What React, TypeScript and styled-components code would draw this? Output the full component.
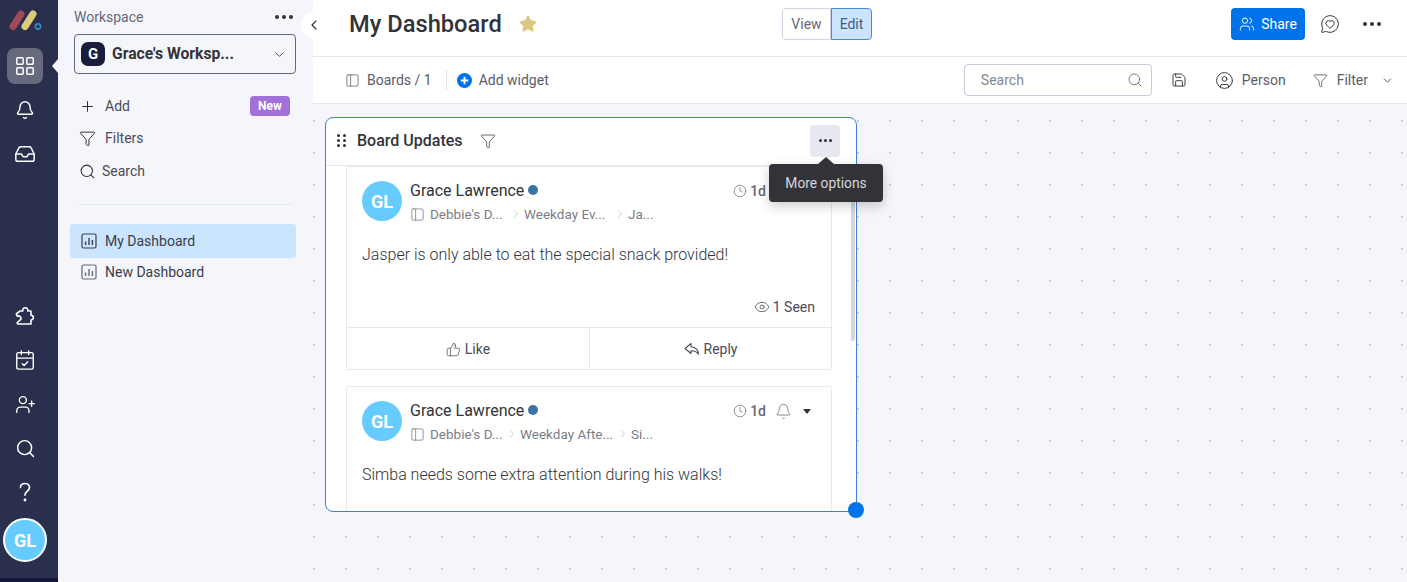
import React from 'react';
import styled, { createGlobalStyle } from 'styled-components';
import {
  Bell, Inbox, LayoutGrid, CalendarCheck, UserPlus, Search, Plus, Funnel, ChevronDown, ChevronLeft,
  Star, PanelLeft, Users, MessageCircleHeart, Save, CircleUser, Clock, Eye, ThumbsUp, ChevronRight,
} from 'lucide-react';

const Global = createGlobalStyle`
  html, body { margin: 0; padding: 0; height: 100%; overflow: hidden; }
  body { font-family: Roboto, "Liberation Sans", sans-serif; color: #323338; background: #fff; }
  #root { height: 100%; }
  * { box-sizing: border-box; }
`;

const Page = styled.div`display: flex; width: 1407px; height: 582px; overflow: hidden; position: relative;`;

const Rail = styled.nav`
  width: 58px; flex: none; background: #292f4c; display: flex; flex-direction: column; align-items: center;
  padding: 10px 8px 0 0; border-bottom: 4px solid #15173a; position: relative; color: #fff;
`;
const LogoBox = styled.div`height: 20px; margin-bottom: 18px; display: flex; margin-left: 2px;`;
const RailActive = styled.div`
  width: 36px; height: 36px; flex: none; border-radius: 8px; background: #676a7c; display: flex; align-items: center; justify-content: center; position: relative;
  &::after { content: ''; position: absolute; left: 45px; top: 11px; border: 7px solid transparent; border-left: 0; border-right: 6px solid #f5f6fb; }
`;
const RailIcon = styled.div`
  height: 44px; width: 36px; display: flex; align-items: center; justify-content: center;
`;
const RailTopGroup = styled.div`display: flex; flex-direction: column; margin-top: 4px;`;
const RailBottomGroup = styled.div`margin-top: auto; display: flex; flex-direction: column; align-items: center;`;
const RailAvatar = styled.div`
  width: 44px; height: 44px; border-radius: 50%; background: #66ccff; border: 2px solid #fff; color: #fff; font-weight: 700; font-size: 18px;
  display: flex; align-items: center; justify-content: center; margin: 4px 0 16px;
`;

const Side = styled.aside`
  width: 255px; flex: none; background: #f5f6fb; padding: 8px 17px 0 16px; display: flex; flex-direction: column; position: relative;
`;
const SideHead = styled.div`display: flex; justify-content: space-between; align-items: center; height: 18px; font-size: 14px; color: #676879; padding-right: 3px; margin-bottom: 8px;`;
const Dots = styled.div<{ $c?: string }>`
  display: flex; gap: 3px;
  i { width: 4px; height: 4px; border-radius: 50%; background: ${p => p.$c || '#323338'}; display: block; }
`;
const WsSelect = styled.div`
  height: 40px; width: 222px; border: 1px solid #676879; border-radius: 4px; display: flex; align-items: center; padding: 0 8px 0 6px; margin-bottom: 16px;
`;
const WsLogo = styled.div`width: 24px; height: 24px; border-radius: 7px; background: #1a1c3c; color: #fff; font-weight: 700; font-size: 15px; display: flex; align-items: center; justify-content: center; margin-right: 7px; flex: none;`;
const WsName = styled.div`font-weight: 700; font-size: 15.7px; flex: 1; white-space: nowrap; margin-top: -2px;`;
const SideRow = styled.div<{ $gap?: number }>`
  display: flex; align-items: center; height: 32px; padding-left: 5px; font-size: 14px; color: #4b4c57; gap: ${p => p.$gap || 9}px;
`;
const NewBadge = styled.span`
  margin-left: auto; margin-right: 6px; width: 40px; height: 20px; border-radius: 4px; background: #a36fd8; color: #fff; font-size: 12px; font-weight: 700; display: flex; align-items: center; justify-content: center;
`;
const SideDivider = styled.div`height: 1px; background: #e6e9ef; margin: 17px 3px 19px 4px;`;
const DashRow = styled.div<{ $active?: boolean }>`
  width: 226px; margin-left: -4px; height: 34px; border-radius: 3px; display: flex; align-items: center; gap: 8px; padding-left: 11px; font-size: 14px; color: #3b3d4c;
  background: ${p => (p.$active ? '#cce5ff' : 'transparent')}; margin-bottom: -3px;
`;

const Collapse = styled.button`
  position: absolute; left: 301px; top: 12px; width: 26px; height: 26px; border-radius: 50%; border: 0; background: #fff; display: flex; align-items: center; justify-content: center; padding: 0; color: #323338; z-index: 3;
`;

const Main = styled.main`flex: 1; min-width: 0; display: flex; flex-direction: column; background: #fff;`;
const Header = styled.header`height: 57px; flex: none; border-bottom: 1px solid #e6e9ef; display: flex; align-items: center; padding: 0 26px 8px 36px;`;
const Title = styled.h1`margin: 0; font-size: 23.7px; font-weight: 500; color: #323338; width: 153px; white-space: nowrap;`;
const StarWrap = styled.div`margin-left: 17px; width: 18px; height: 18px; display: flex;`;
const Toggle = styled.div`margin-left: 245px; display: flex; height: 32px;`;
const ToggleBtn = styled.div<{ $on?: boolean }>`
  display: flex; align-items: center; justify-content: center; font-size: 14px; width: ${p => (p.$on ? 41 : 49)}px;
  border: 1px solid ${p => (p.$on ? '#4a8ad4' : '#d0d4e4')}; background: ${p => (p.$on ? '#cce5ff' : '#fff')}; color: ${p => (p.$on ? '#3f5b83' : '#676879')};
  border-radius: ${p => (p.$on ? '0 4px 4px 0' : '4px 0 0 4px')};
`;
const ShareBtn = styled.div`margin-left: auto; width: 74px; height: 32px; border-radius: 4px; background: #0073ea; color: #fff; font-size: 14px; display: flex; align-items: center; justify-content: center; gap: 6px;`;
const IconSlot = styled.div<{ $ml: number }>`margin-left: ${p => p.$ml}px; display: flex; align-items: center;`;

const Toolbar = styled.div`height: 47px; flex: none; border-bottom: 1px solid #e6e9ef; display: flex; align-items: center; padding: 0 13px 0 32px; font-size: 14px; color: #5c5d6b;`;
const ToolSep = styled.div`width: 1px; height: 20px; background: #e0e2ea; margin: 0 10px 0 14px;`;
const ToolText = styled.span<{ $ml?: number }>`margin-left: ${p => p.$ml ?? 7}px; white-space: nowrap;`;
const SearchBox = styled.div`
  margin-left: auto; width: 188px; height: 32px; border: 1px solid #c9ccd8; border-radius: 4px; display: flex; align-items: center; justify-content: space-between; padding: 0 8px 0 16px; color: #858793; font-size: 14px;
`;

const Canvas = styled.div`
  flex: 1; min-height: 0; padding: 13px 0 0 12px; background-color: #f5f6fb; position: relative;
  background-image: radial-gradient(circle at 1px 1px, #c8cad4 1px, transparent 1.3px);
  background-size: 32px 32px; background-position: 0px 16px;
`;
const Widget = styled.section`
  width: 532px; height: 395px; background: #fff; border: 1px solid #3f7fd6; border-radius: 8px; position: relative; display: flex; flex-direction: column;
`;
const WidgetHead = styled.div`height: 48px; flex: none; border-bottom: 1px solid #e6e9ef; display: flex; align-items: center; padding: 0 0 2px 11px;`;
const Grip = styled.div`
  display: grid; grid-template-columns: 3px 3px; gap: 2px 3px; margin-right: 11px;
  i { width: 3px; height: 3px; border-radius: 50%; background: #323338; display: block; }
`;
const WidgetTitle = styled.div`font-size: 16px; font-weight: 500; color: #323338; margin-right: 17px; white-space: nowrap;`;
const MoreBtn = styled.div`
  position: absolute; left: 484px; top: 7px; width: 30px; height: 32px; border-radius: 4px; background: #e6e9ef; display: flex; align-items: center; justify-content: center; padding-bottom: 2px;
`;
const Tooltip = styled.div`
  position: absolute; left: 443px; top: 46px; width: 114px; height: 38px; background: #323338; color: #d5d6db; font-size: 13.8px; border-radius: 4px;
  display: flex; align-items: center; justify-content: center; z-index: 4; box-shadow: 0 4px 12px rgba(0,0,0,.2);
  &::before { content: ''; position: absolute; left: 49px; top: -7px; border: 8px solid transparent; border-top: 0; border-bottom: 7px solid #323338; }
`;
const ResizeDot = styled.div`position: absolute; right: -8px; bottom: -7px; width: 16px; height: 16px; border-radius: 50%; background: #0073ea; z-index: 2;`;
const Scrollbar = styled.div`position: absolute; left: 525px; top: 48px; width: 4px; height: 175px; background: #d6d7dc; border-radius: 2px;`;
const List = styled.div`flex: 1; min-height: 0; overflow: hidden; padding-left: 20px; display: flex; flex-direction: column; gap: 16px; border-radius: 0 0 8px 8px;`;
const Card = styled.article`width: 486px; flex: none; height: 204px; border: 1px solid #e6e9ef; border-radius: 2px; display: flex; flex-direction: column; position: relative; background: #fff;`;
const CardTop = styled.div`display: flex; padding: 14px 15px 0 15px; height: 74px;`;
const Avatar = styled.div`width: 40px; height: 40px; border-radius: 50%; background: #66ccff; color: #fff; font-weight: 700; font-size: 18px; display: flex; align-items: center; justify-content: center; flex: none;`;
const Who = styled.div`margin-left: 8px; display: flex; flex-direction: column; flex: 1;`;
const NameRow = styled.div`display: flex; align-items: center; font-size: 16px; color: #323338; height: 20px; margin-top: -1px;`;
const Online = styled.i`width: 10px; height: 10px; border-radius: 50%; background: #3a73a4; margin-left: 4px; display: block;`;
const Crumbs = styled.div`display: flex; align-items: center; font-size: 13.5px; color: #7c7d89; height: 20px; margin-top: 4px; white-space: nowrap;`;
const Crumb = styled.span<{ $w: number }>`width: ${p => p.$w}px; display: block;`;
const Meta = styled.div`display: flex; align-items: center; height: 20px; color: #676879; font-size: 14px; font-weight: 500;`;
const Caret = styled.i`width: 0; height: 0; border: 4px solid transparent; border-top: 5px solid #323338; border-bottom: 0; margin-left: 11px; margin-right: 5px; display: block;`;
const Body = styled.p`margin: 0; padding: 0 15px; font-size: 16px; font-weight: 300; color: #323338; height: 40px; white-space: nowrap; margin-top: 4px;`;
const Seen = styled.div`display: flex; align-items: center; justify-content: flex-end; gap: 3px; padding-right: 16px; font-size: 14px; color: #4b4c57; height: 18px; margin-top: 13px;`;
const Actions = styled.div`margin-top: auto; height: 42px; border-top: 1px solid #e6e9ef; display: grid; grid-template-columns: 243px 1fr;`;
const Action = styled.div<{ $split?: boolean }>`
  display: flex; align-items: center; justify-content: center; gap: 4px; font-size: 14px; color: #4b4c57; padding-top: 1px;
  border-right: ${p => (p.$split ? '1px solid #e6e9ef' : '0')};
`;

const Logo = () => (
  <svg width="34" height="22" viewBox="0 0 34 22">
    <line x1="4" y1="16.5" x2="12" y2="4" stroke="#a14b57" strokeWidth="7" strokeLinecap="round" />
    <line x1="16" y1="16.5" x2="24" y2="4" stroke="#dccb7e" strokeWidth="7" strokeLinecap="round" />
    <circle cx="29" cy="16.5" r="2.6" fill="none" stroke="#2f8fc4" strokeWidth="1.6" />
  </svg>
);
const ChartSq = ({ c }: { c: string }) => (
  <svg width="16" height="16" viewBox="0 0 16 16" fill="none" stroke={c} strokeWidth="1.2">
    <rect x="1" y="1" width="14" height="14" rx="1.5" />
    <path d="M4.6 12V8.5M8 12V5M11.4 12V7" strokeWidth="1.4" />
  </svg>
);
const Question = () => (
  <svg width="20" height="22" viewBox="0 0 20 22" fill="none" stroke="#fff" strokeWidth="1.7" strokeLinecap="round">
    <path d="M5.5 6.5C5.5 3.8 7.5 2.5 10 2.5s4.5 1.6 4.5 4c0 3.6-4.5 3.6-4.5 7.5" />
    <circle cx="10" cy="19" r=".6" fill="#fff" />
  </svg>
);
const PuzzleIcon = () => (
  <svg width="22" height="22" viewBox="0 0 22 22" fill="none" stroke="#fff" strokeWidth="1.6" strokeLinejoin="round">
    <path d="M6 6h2.8a2.6 2.6 0 1 1 5 0H17v4.2a2.4 2.4 0 1 1 0 4.8V19H4.2c-.9 0-1.3-1-.7-1.6l2.2-2a2.4 2.4 0 1 0-2.4-4.2L2.6 10c-.5-.6-.2-1.4.4-1.7z" />
  </svg>
);
const ReplyArrow = () => (
  <svg width="16" height="14" viewBox="0 0 16 14" fill="none" stroke="#4b4c57" strokeWidth="1.1" strokeLinejoin="round">
    <path d="M7 1.5 1 6.5l6 5V8.8c3 0 5.6.6 7.5 3.4-.3-4.4-3-7-7.5-7.4z" />
  </svg>
);
const AddCircle = () => (
  <svg width="15" height="15" viewBox="0 0 15 15">
    <circle cx="7.5" cy="7.5" r="7.5" fill="#0073ea" />
    <path d="M7.5 3.8v7.4M3.8 7.5h7.4" stroke="#fff" strokeWidth="1.8" />
  </svg>
);
const ThreeDots = ({ c }: { c?: string }) => <Dots $c={c}><i /><i /><i /></Dots>;

const SmallDots = styled(Dots)`
  gap: 2px; i { width: 3px; height: 3px; }
`;

type Update = { aw: number; b: string; bw: number; c: string; body: string; footer: boolean };
const UpdateCard = ({ u }: { u: Update }) => (
  <Card>
    <CardTop>
      <Avatar>GL</Avatar>
      <Who>
        <NameRow>Grace Lawrence<Online /></NameRow>
        <Crumbs>
          <PanelLeft size={15} strokeWidth={1.1} color="#676879" style={{ marginRight: 5 }} />
          <Crumb $w={u.aw}>Debbie's D...</Crumb>
          <ChevronRight size={12} strokeWidth={1} color="#9a9ba6" style={{ margin: '0 2px 0 3px' }} />
          <Crumb $w={u.bw}>{u.b}</Crumb>
          <ChevronRight size={12} strokeWidth={1} color="#9a9ba6" style={{ margin: '0 2px 0 0' }} />
          <span>{u.c}</span>
        </Crumbs>
      </Who>
      <Meta>
        <Clock size={14} strokeWidth={1.2} color="#676879" style={{ marginRight: 3 }} />
        1d
        <Bell size={17} strokeWidth={1.1} color="#676879" style={{ marginLeft: 9 }} />
        <Caret />
      </Meta>
    </CardTop>
    <Body>{u.body}</Body>
    {u.footer && (
      <>
        <Seen><Eye size={16} strokeWidth={1.2} />1 Seen</Seen>
        <Actions>
          <Action $split><ThumbsUp size={15} strokeWidth={1.2} />Like</Action>
          <Action><ReplyArrow />Reply</Action>
        </Actions>
      </>
    )}
  </Card>
);

const updates: Update[] = [
  { aw: 77, b: 'Weekday Ev...', bw: 90, c: 'Ja...', body: 'Jasper is only able to eat the special snack provided!', footer: true },
  { aw: 73, b: 'Weekday Afte...', bw: 97, c: 'Si...', body: 'Simba needs some extra attention during his walks!', footer: false },
];

export default function App() {
  return (
    <Page>
      <Global />
      <Rail>
        <LogoBox><Logo /></LogoBox>
        <RailActive><LayoutGrid size={22} strokeWidth={1.6} color="#fff" /></RailActive>
        <RailTopGroup>
          <RailIcon><Bell size={20} strokeWidth={1.7} /></RailIcon>
          <RailIcon><Inbox size={22} strokeWidth={1.6} /></RailIcon>
        </RailTopGroup>
        <RailBottomGroup>
          <RailIcon><PuzzleIcon /></RailIcon>
          <RailIcon><CalendarCheck size={22} strokeWidth={1.5} /></RailIcon>
          <RailIcon><UserPlus size={21} strokeWidth={1.6} /></RailIcon>
          <RailIcon><Search size={21} strokeWidth={1.7} /></RailIcon>
          <RailIcon><Question /></RailIcon>
          <RailAvatar>GL</RailAvatar>
        </RailBottomGroup>
      </Rail>
      <Side>
        <SideHead>Workspace<ThreeDots /></SideHead>
        <WsSelect>
          <WsLogo>G</WsLogo>
          <WsName>Grace's Worksp...</WsName>
          <ChevronDown size={15} strokeWidth={1.6} color="#4b4c57" />
        </WsSelect>
        <SideRow><Plus size={17} strokeWidth={1.4} color="#323338" />Add<NewBadge>New</NewBadge></SideRow>
        <SideRow><Funnel size={17} strokeWidth={1.4} color="#323338" />Filters</SideRow>
        <SideRow $gap={6} style={{ marginTop: 1 }}><Search size={17} strokeWidth={1.5} color="#323338" />Search</SideRow>
        <SideDivider />
        <DashRow $active><ChartSq c="#3b3d56" />My Dashboard</DashRow>
        <DashRow><ChartSq c="#676879" />New Dashboard</DashRow>
      </Side>
      <Collapse aria-label="collapse"><ChevronLeft size={16} strokeWidth={1.8} /></Collapse>
      <Main>
        <Header>
          <Title>My Dashboard</Title>
          <StarWrap><Star size={18} fill="#d9c97e" color="#d9c97e" /></StarWrap>
          <Toggle>
            <ToggleBtn>View</ToggleBtn>
            <ToggleBtn $on>Edit</ToggleBtn>
          </Toggle>
          <ShareBtn><Users size={16} strokeWidth={1.4} />Share</ShareBtn>
          <IconSlot $ml={15}><MessageCircleHeart size={20} strokeWidth={1.2} color="#323338" /></IconSlot>
          <IconSlot $ml={23}><ThreeDots /></IconSlot>
        </Header>
        <Toolbar>
          <PanelLeft size={15} strokeWidth={1.1} color="#4b4c57" />
          <ToolText>Boards / 1</ToolText>
          <ToolSep />
          <AddCircle />
          <ToolText>Add widget</ToolText>
          <SearchBox>Search<Search size={16} strokeWidth={1.3} color="#676879" /></SearchBox>
          <IconSlot $ml={19}><Save size={16} strokeWidth={1.4} color="#323338" /></IconSlot>
          <IconSlot $ml={28}><CircleUser size={19} strokeWidth={1.2} color="#323338" /></IconSlot>
          <ToolText $ml={8}>Person</ToolText>
          <IconSlot $ml={27}><Funnel size={15} strokeWidth={1.1} color="#323338" /></IconSlot>
          <ToolText $ml={9}>Filter</ToolText>
          <IconSlot $ml={13}><ChevronDown size={13} strokeWidth={1.5} color="#323338" /></IconSlot>
        </Toolbar>
        <Canvas>
          <Widget>
            <WidgetHead>
              <Grip><i /><i /><i /><i /><i /><i /></Grip>
              <WidgetTitle>Board Updates</WidgetTitle>
              <Funnel size={16} strokeWidth={1.1} color="#323338" />
            </WidgetHead>
            <MoreBtn><SmallDots><i /><i /><i /></SmallDots></MoreBtn>
            <Tooltip>More options</Tooltip>
            <List>
              {updates.map(u => <UpdateCard key={u.c} u={u} />)}
            </List>
            <Scrollbar />
            <ResizeDot />
          </Widget>
        </Canvas>
      </Main>
    </Page>
  );
}
